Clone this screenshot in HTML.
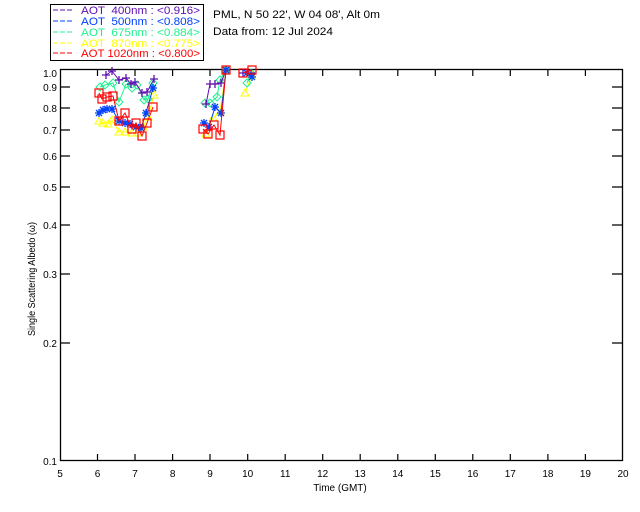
<!DOCTYPE html>
<html><head><meta charset="utf-8"><style>
html,body{margin:0;padding:0;background:#fff;}
svg{display:block;font-family:"Liberation Sans",sans-serif;}
</style></head><body>
<svg width="640" height="512" viewBox="0 0 640 512" xmlns="http://www.w3.org/2000/svg">
<defs>
<marker id="mp" viewBox="-5 -5 10 10" markerWidth="10" markerHeight="10" markerUnits="userSpaceOnUse" refX="0" refY="0"><path d="M-4 0H4M0-4V4" stroke="#6010b0" stroke-width="1.3" fill="none"/></marker>
<marker id="mb" viewBox="-5 -5 10 10" markerWidth="10" markerHeight="10" markerUnits="userSpaceOnUse" refX="0" refY="0"><path d="M-4 0H4M0-4V4M-3-3L3 3M-3 3L3-3" stroke="#0040ff" stroke-width="1.3" fill="none"/></marker>
<marker id="mg" viewBox="-5 -5 10 10" markerWidth="10" markerHeight="10" markerUnits="userSpaceOnUse" refX="0" refY="0"><path d="M0-4L4 0L0 4L-4 0Z" stroke="#20f090" stroke-width="1" fill="none"/></marker>
<marker id="my" viewBox="-5 -5 10 10" markerWidth="10" markerHeight="10" markerUnits="userSpaceOnUse" refX="0" refY="0"><path d="M0-4L4 3H-4Z" stroke="#ffff00" stroke-width="1" fill="none"/></marker>
<marker id="mr" viewBox="-5 -5 10 10" markerWidth="10" markerHeight="10" markerUnits="userSpaceOnUse" refX="0" refY="0"><rect x="-4" y="-4" width="8" height="8" stroke="#ff0000" stroke-width="1.2" fill="none"/></marker>
</defs>
<!-- legend -->
<rect x="50.5" y="4.5" width="153" height="56" fill="none" stroke="#000"/>
<g font-size="11">
<line x1="53" y1="10" x2="74" y2="10" stroke="#6010b0" stroke-dasharray="5,2"/>
<text x="81" y="14" fill="#6010b0" xml:space="preserve" textLength="119" lengthAdjust="spacingAndGlyphs">AOT  400nm : &lt;0.916&gt;</text>
<line x1="53" y1="21" x2="74" y2="21" stroke="#0040ff" stroke-dasharray="5,2"/>
<text x="81" y="25" fill="#0040ff" xml:space="preserve" textLength="119" lengthAdjust="spacingAndGlyphs">AOT  500nm : &lt;0.808&gt;</text>
<line x1="53" y1="32" x2="74" y2="32" stroke="#20f090" stroke-dasharray="5,2"/>
<text x="81" y="36" fill="#20f090" xml:space="preserve" textLength="119" lengthAdjust="spacingAndGlyphs">AOT  675nm : &lt;0.884&gt;</text>
<line x1="53" y1="43" x2="74" y2="43" stroke="#ffff00" stroke-dasharray="5,2"/>
<text x="81" y="47" fill="#ffff00" xml:space="preserve" textLength="119" lengthAdjust="spacingAndGlyphs">AOT  870nm : &lt;0.775&gt;</text>
<line x1="53" y1="53" x2="74" y2="53" stroke="#ff0000" stroke-dasharray="5,2"/>
<text x="81" y="57" fill="#ff0000" xml:space="preserve" textLength="119" lengthAdjust="spacingAndGlyphs">AOT 1020nm : &lt;0.800&gt;</text>
</g>
<g font-size="11" fill="#000">
<text x="213" y="18" textLength="167" lengthAdjust="spacingAndGlyphs">PML, N 50 22', W 04 08', Alt 0m</text>
<text x="213" y="35" textLength="120" lengthAdjust="spacingAndGlyphs">Data from: 12 Jul 2024</text>
</g>
<!-- axes -->
<rect x="60.5" y="69.5" width="562" height="391" fill="none" stroke="#000" stroke-width="1.3"/>
<g stroke="#000" stroke-width="1.2">
<path d="M97.5 461V454M135 461V454M172.6 461V454M210 461V454M247.7 461V454M285.2 461V454M322.7 461V454M360.2 461V454M397.8 461V454M435.3 461V454M472.8 461V454M510.3 461V454M547.9 461V454M585.4 461V454"/>
<path d="M97.5 69V76M135 69V76M172.6 69V76M210 69V76M247.7 69V76M285.2 69V76M322.7 69V76M360.2 69V76M397.8 69V76M435.3 69V76M472.8 69V76M510.3 69V76M547.9 69V76M585.4 69V76"/>
<path d="M60 87H70M60 108H70M60 130H70M60 156H70M60 187H70M60 225H70M60 274H70M60 343H70"/>
<path d="M623 87H612M623 108H612M623 130H612M623 156H612M623 187H612M623 225H612M623 274H612M623 343H612"/>
</g>
<g font-size="10" fill="#000" text-anchor="end">
<text x="57" y="77">1.0</text><text x="57" y="91">0.9</text><text x="57" y="112">0.8</text><text x="57" y="134">0.7</text>
<text x="57" y="160">0.6</text><text x="57" y="191">0.5</text><text x="57" y="229">0.4</text><text x="57" y="278">0.3</text>
<text x="57" y="347">0.2</text><text x="57" y="465">0.1</text>
</g>
<g font-size="10" fill="#000" text-anchor="middle">
<text x="60" y="477">5</text><text x="97.5" y="477">6</text><text x="135" y="477">7</text><text x="172.6" y="477">8</text>
<text x="210" y="477">9</text><text x="247.7" y="477">10</text><text x="285.2" y="477">11</text><text x="322.7" y="477">12</text>
<text x="360.2" y="477">13</text><text x="397.8" y="477">14</text><text x="435.3" y="477">15</text><text x="472.8" y="477">16</text>
<text x="510.3" y="477">17</text><text x="547.9" y="477">18</text><text x="585.4" y="477">19</text><text x="623" y="477">20</text>
<text x="340" y="491">Time (GMT)</text>
<text transform="translate(35,279) rotate(-90)" textLength="114" lengthAdjust="spacingAndGlyphs">Single Scattering Albedo (ω)</text>
</g>
<!-- data -->
<g fill="none" stroke-width="1">
<polyline stroke="#ffff00" marker-start="url(#my)" marker-mid="url(#my)" marker-end="url(#my)" points="99,121 103,123 108,124 112,120 119,132 125,132 132,133 137,133 143,127 148,117 154,95"/>
<polyline stroke="#ffff00" marker-start="url(#my)" marker-mid="url(#my)" marker-end="url(#my)" points="206,134 213,118 220,112 226,70"/>
<polyline stroke="#ffff00" marker-start="url(#my)" marker-mid="url(#my)" marker-end="url(#my)" points="245,93 252,75"/>
<polyline stroke="#20f090" marker-start="url(#mg)" marker-mid="url(#mg)" marker-end="url(#mg)" points="100,87 105,85 113,83 119,102 126,84 132,88 137,85 144,100 148,99 153,83"/>
<polyline stroke="#20f090" marker-start="url(#mg)" marker-mid="url(#mg)" marker-end="url(#mg)" points="205,103 210,103 217,97 220,80 226,70"/>
<polyline stroke="#20f090" marker-start="url(#mg)" marker-mid="url(#mg)" marker-end="url(#mg)" points="247,83 251,73"/>
<polyline stroke="#6010b0" marker-start="url(#mp)" marker-mid="url(#mp)" marker-end="url(#mp)" points="106,75 112,71 119,80 126,78 131,84 135,82 142,93 147,92 154,79"/>
<polyline stroke="#6010b0" marker-start="url(#mp)" marker-mid="url(#mp)" marker-end="url(#mp)" points="206,104 210,84 215,84 221,83 226,70"/>
<polyline stroke="#6010b0" marker-start="url(#mp)" marker-mid="url(#mp)" marker-end="url(#mp)" points="243,73 251,73"/>
<polyline stroke="#0040ff" marker-start="url(#mb)" marker-mid="url(#mb)" marker-end="url(#mb)" points="99,113 103,110 107,109 112,109 119,121 125,123 130,124 136,127 141,128 146,113 153,88"/>
<polyline stroke="#0040ff" marker-start="url(#mb)" marker-mid="url(#mb)" marker-end="url(#mb)" points="204,123 209,127 215,107 221,113 226,70"/>
<polyline stroke="#0040ff" marker-start="url(#mb)" marker-mid="url(#mb)" marker-end="url(#mb)" points="247,73 252,77"/>
<polyline stroke="#ff0000" marker-start="url(#mr)" marker-mid="url(#mr)" marker-end="url(#mr)" points="99,93 102,99 107,97 113,96 119,121 125,113 132,129 136,123 142,136 147,123 153,107"/>
<polyline stroke="#ff0000" marker-start="url(#mr)" marker-mid="url(#mr)" marker-end="url(#mr)" points="203,129 208,134 214,125 220,135 226,70"/>
<polyline stroke="#ff0000" marker-start="url(#mr)" marker-mid="url(#mr)" marker-end="url(#mr)" points="243,73 252,70"/>
</g>
</svg>
</body></html>
